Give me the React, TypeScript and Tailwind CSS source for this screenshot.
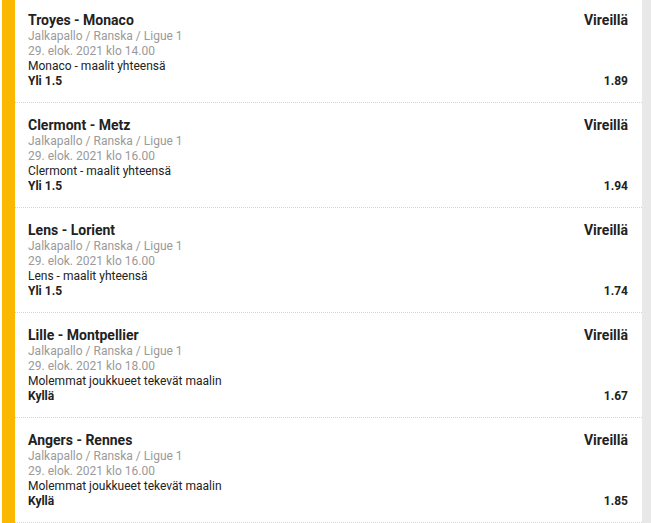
const bets = [
  { match: "Troyes - Monaco", time: "29. elok. 2021 klo 14.00", market: "Monaco - maalit yhteensä", pick: "Yli 1.5", odds: "1.89" },
  { match: "Clermont - Metz", time: "29. elok. 2021 klo 16.00", market: "Clermont - maalit yhteensä", pick: "Yli 1.5", odds: "1.94" },
  { match: "Lens - Lorient", time: "29. elok. 2021 klo 16.00", market: "Lens - maalit yhteensä", pick: "Yli 1.5", odds: "1.74" },
  { match: "Lille - Montpellier", time: "29. elok. 2021 klo 18.00", market: "Molemmat joukkueet tekevät maalin", pick: "Kyllä", odds: "1.67" },
  { match: "Angers - Rennes", time: "29. elok. 2021 klo 16.00", market: "Molemmat joukkueet tekevät maalin", pick: "Kyllä", odds: "1.85" },
]

export default function App() {
  return (
    <div className="flex h-[523px] w-[651px] overflow-hidden bg-white font-['Roboto',sans-serif]">
      <div className="ml-[2px] w-[640px] border-l-[13px] border-[#fbb800] bg-white">
        <div className="-mt-[2px]">
          {bets.map((bet) => (
            <div
              key={bet.match}
              className="flex justify-between border-b border-dotted border-[#d4d4d4] pl-[13px] pr-[14px] pt-[14px] pb-[13px]"
            >
              <div className="flex flex-col">
                <div className="text-[14px] font-bold leading-[17px] text-[#222]">{bet.match}</div>
                <div className="text-[12px] leading-[15px] text-[#9a9a9a]">Jalkapallo / Ranska / Ligue 1</div>
                <div className="text-[12px] leading-[15px] text-[#9a9a9a]">{bet.time}</div>
                <div className="text-[12px] leading-[15px] text-[#222]">{bet.market}</div>
                <div className="text-[12px] font-bold leading-[15px] text-[#222]">{bet.pick}</div>
              </div>
              <div className="flex flex-col items-end justify-between">
                <div className="text-[14px] font-bold leading-[17px] text-[#222]">Vireillä</div>
                <div className="text-[12px] font-bold leading-[15px] text-[#222]">{bet.odds}</div>
              </div>
            </div>
          ))}
        </div>
      </div>
      <div className="flex-1 bg-[#e8e8e8]" />
    </div>
  )
}
